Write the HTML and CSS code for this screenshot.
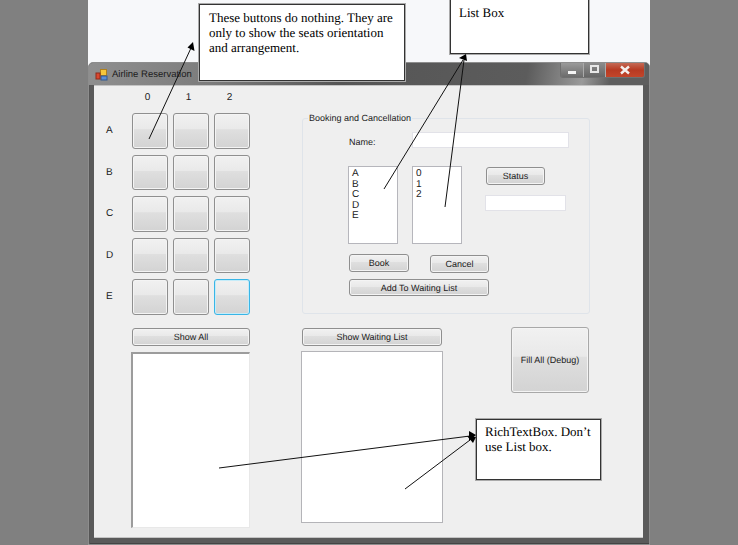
FILE: index.html
```html
<!DOCTYPE html>
<html lang="en">
<head>
<meta charset="utf-8">
<title>Airline Reservation</title>
<link rel="stylesheet" href="styles.css">
</head>
<body>
<div class="stage">
  <div class="page">
    <div class="window">
      <div class="titlebar">
        <svg class="appicon" width="13" height="13" viewBox="0 0 13 13">
          <rect x="5.500" y="1.500" width="6" height="6" fill="#f5c63c" stroke="#b0801c"/>
          <rect x="6" y="8" width="6" height="4" fill="#5b8fd8" stroke="#31598f"/>
          <rect x="1" y="5" width="4" height="6" fill="#d9472f" stroke="#8e2a1a"/>
        </svg>
        <span class="apptitle">Airline Reservation</span>
        <div class="controls">
          <span class="ctl ctl-min"><i class="glyph-min"></i></span>
          <span class="ctl ctl-max"><i class="glyph-max"></i></span>
          <span class="ctl ctl-close">
            <svg width="12" height="10" viewBox="0 0 12 10"><path d="M2 1.500 L10 8.500 M10 1.500 L2 8.500" stroke="#f4f0ee" stroke-width="2.400"/></svg>
          </span>
        </div>
      </div>
      <div class="client">
        <div class="top-row">
          <div class="seats">
            <span></span><span class="hdr">0</span><span class="hdr">1</span><span class="hdr">2</span>
            <span class="rowlabel">A</span><button class="btn seat"></button><button class="btn seat"></button><button class="btn seat"></button>
            <span class="rowlabel">B</span><button class="btn seat"></button><button class="btn seat"></button><button class="btn seat"></button>
            <span class="rowlabel">C</span><button class="btn seat"></button><button class="btn seat"></button><button class="btn seat"></button>
            <span class="rowlabel">D</span><button class="btn seat"></button><button class="btn seat"></button><button class="btn seat"></button>
            <span class="rowlabel">E</span><button class="btn seat"></button><button class="btn seat"></button><button class="btn seat focus"></button>
          </div>
          <fieldset class="group">
            <legend class="legend">Booking and Cancellation</legend>
            <div class="name-row">
              <span class="name-label">Name:</span>
              <span class="input input-name"></span>
            </div>
            <div class="list-row">
              <div class="listbox"><div>A</div><div>B</div><div>C</div><div>D</div><div>E</div></div>
              <div class="listbox listbox-2"><div>0</div><div>1</div><div>2</div></div>
              <div class="status-col">
                <button class="btn btn-status">Status</button>
                <span class="input input-status"></span>
              </div>
            </div>
            <div class="action-row">
              <button class="btn btn-book">Book</button>
              <button class="btn btn-cancel">Cancel</button>
            </div>
            <button class="btn btn-wait">Add To Waiting List</button>
          </fieldset>
        </div>
        <div class="bottom-row">
          <div class="stack-all">
            <button class="btn btn-all">Show All</button>
            <div class="rtb-all"></div>
          </div>
          <div class="stack-wait">
            <button class="btn btn-showwait">Show Waiting List</button>
            <div class="rtb-wait"></div>
          </div>
          <button class="btn btn-fill">Fill All (Debug)</button>
        </div>
      </div>
    </div>
  </div>
  <div class="note note-buttons">These buttons do nothing. They are only to show the seats orientation and arrangement.</div>
  <div class="note note-list">List Box</div>
  <div class="note note-rich">RichTextBox. Don’t use List box.</div>
  <svg class="arrows" width="738" height="545" viewBox="0 0 738 545">
    <g stroke="#111" stroke-width="1" fill="none">
      <path d="M149 139 L191 48"/>
      <path d="M384 189 L463 60"/>
      <path d="M445 207 L464 60"/>
      <path d="M219 468 L470 436"/>
      <path d="M405 489 L470 440"/>
    </g>
    <g fill="#000">
      <path d="M193 42 L194.500 51 L187.500 47.500 Z"/>
      <path d="M466 54 L467 61 L459 58 Z"/>
      <path d="M476 435 L469 431 L469 441 Z"/>
      <path d="M476 437 L473 443 L467 436 Z"/>
    </g>
  </svg>
</div>
</body>
</html>
```
FILE: styles.css
```css
* { box-sizing: border-box; }
html, body { margin: 0; padding: 0; }
body { font-family: "Liberation Sans", Arial, sans-serif; text-rendering: geometricPrecision; }
.stage { position: relative; width: 738px; height: 545px; overflow: hidden; background: #808080; }
.page { margin-left: 88px; width: 562px; height: 545px; padding-top: 62px; background: #f7f8fa; }
.window { height: 483px; background: #5a5a5a; border: 1px solid #8d8d8d; border-radius: 5px 5px 0 0; box-shadow: inset 1px 0 0 #555, inset 0 -1px 0 #444; padding: 0 6px 5px 5px; }
.titlebar { height: 22px; display: flex; align-items: center; margin: 0 -6px 0 -5px; padding-left: 6px; background: linear-gradient(100deg, #8f8f8f 0, #7c7c7c 22%, #555 45%, #5c5c5c 78%, #9a9a9a 88%, #5e5e5e 93%); border-radius: 4px 4px 0 0; }
.apptitle { margin-left: 4px; font-size: 9.500px; color: #1c1c1c; }
.controls { margin-left: auto; margin-right: 4px; margin-top: -7px; display: flex; height: 15px; border: 1px solid #707070; border-top: 0; border-radius: 0 0 3px 3px; overflow: hidden; }
.ctl { display: flex; align-items: center; justify-content: center; height: 100%; }
.ctl-min { width: 23px; background: linear-gradient(#9a9a9a, #6c6c6c); border-right: 1px solid #aaa; align-items: flex-end; padding-bottom: 3px; }
.ctl-max { width: 22px; background: linear-gradient(#8c8c8c, #666); border-right: 1px solid #aaa; }
.ctl-close { width: 38px; background: linear-gradient(#c46a55 0, #b73a22 50%, #c2452a 100%); }
.glyph-min { display: block; width: 8px; height: 3px; background: #f4f4f4; }
.glyph-max { display: block; width: 9px; height: 8px; border: 2px solid #e8e8e8; margin-top: -2px; }
.client { height: 453px; background: #efefef; border: 1px solid #c4c4c4; border-width: 1px 0 1px 0; }
.top-row { height: 241px; display: flex; padding-left: 12px; padding-top: 6px; }
.seats { display: grid; grid-template-columns: 21px 36px 36px 36px; grid-template-rows: 15.500px repeat(5, 36px); column-gap: 5px; row-gap: 5.500px; width: 144px; height: 0; color: #1c1c1c; font-size: 10px; }
.hdr { text-align: center; line-height: 12px; padding-right: 5px; }
.rowlabel { align-self: center; line-height: 12px; }
.btn { display: block; margin: 0; padding: 0; font-family: inherit; font-size: 9px; color: #1a1a1a; text-align: center; border: 1px solid #8f8f8f; border-radius: 3px; background: linear-gradient(#f1f1f1 0, #e9e9e9 44%, #dfdfdf 46%, #d3d3d3 100%); box-shadow: inset 0 0 0 1px #f4f4f4; text-rendering: geometricPrecision; }
.seat { width: 36px; height: 35.500px; }
.focus { border-color: #39b5e6; box-shadow: inset 0 0 0 1px #c5ecf9; }
.group { margin: 20px 0 0 52px; padding: 0; width: 288px; height: 202px; min-width: 0; border: 1px solid #dfe4ea; border-radius: 3px; font-size: 9px; color: #1c1c1c; }
.legend { margin-left: 5px; padding: 0 1px; font-size: 9px; line-height: 12px; }
.name-row { display: flex; align-items: center; margin-top: 8px; padding-left: 46px; height: 16px; }
.name-label { width: 63px; padding-top: 4px; }
.input { display: block; background: #fff; border: 1px solid #e2e2e8; }
.input-name { width: 157px; height: 16px; }
.list-row { display: flex; margin-top: 18px; padding-left: 45px; height: 78px; }
.listbox { width: 50px; height: 78px; background: #fff; border: 1px solid #b6b6bc; padding: 2px 3px; line-height: 10.500px; font-size: 10px; }
.listbox-2 { margin-left: 14px; }
.status-col { margin-left: 23px; padding-top: 1px; }
.btn-status { width: 59px; height: 18px; margin-left: 1px; }
.input-status { width: 81px; height: 16px; margin-top: 10px; }
.action-row { display: flex; align-items: flex-start; margin-top: 10px; padding-left: 46px; height: 19px; }
.btn-book { width: 60px; height: 18px; }
.btn-cancel { width: 59px; height: 18px; margin-left: 21px; margin-top: 1px; }
.btn-wait { width: 140px; height: 17px; margin-left: 46px; margin-top: 6px; }
.bottom-row { display: flex; padding-left: 37px; }
.stack-all { width: 119px; padding-top: 1px; }
.btn-all { width: 118px; height: 18px; margin-left: 1px; }
.rtb-all { height: 176px; margin-top: 6px; background: #fff; border: 1px solid #e8e8e8; border-top: 2px solid #9c9c9c; border-left: 2px solid #9c9c9c; }
.stack-wait { width: 142px; margin-left: 51px; padding-top: 1px; }
.btn-showwait { width: 140px; height: 18px; margin-left: 1px; }
.rtb-wait { height: 172px; margin-top: 5px; background: #fff; border: 1px solid #b4b4b8; }
.btn-fill { width: 78px; height: 66px; margin-left: 68px; border-color: #a8a8a8; }
.note { position: absolute; background: #fff; border: 1px solid #333; box-shadow: 0 0 0 1px #aaa; font-family: "Liberation Serif", "Times New Roman", serif; font-size: 13px; line-height: 15px; color: #000; }
.note-buttons { left: 199px; top: 4px; width: 206px; height: 77px; padding: 5px 9px; }
.note-list { left: 450px; top: -1px; width: 139px; height: 55px; padding: 5px 8px; }
.note-rich { left: 476px; top: 419px; width: 125px; height: 61px; padding: 4px 8px; }
.arrows { position: absolute; left: 0; top: 0; pointer-events: none; }
```
